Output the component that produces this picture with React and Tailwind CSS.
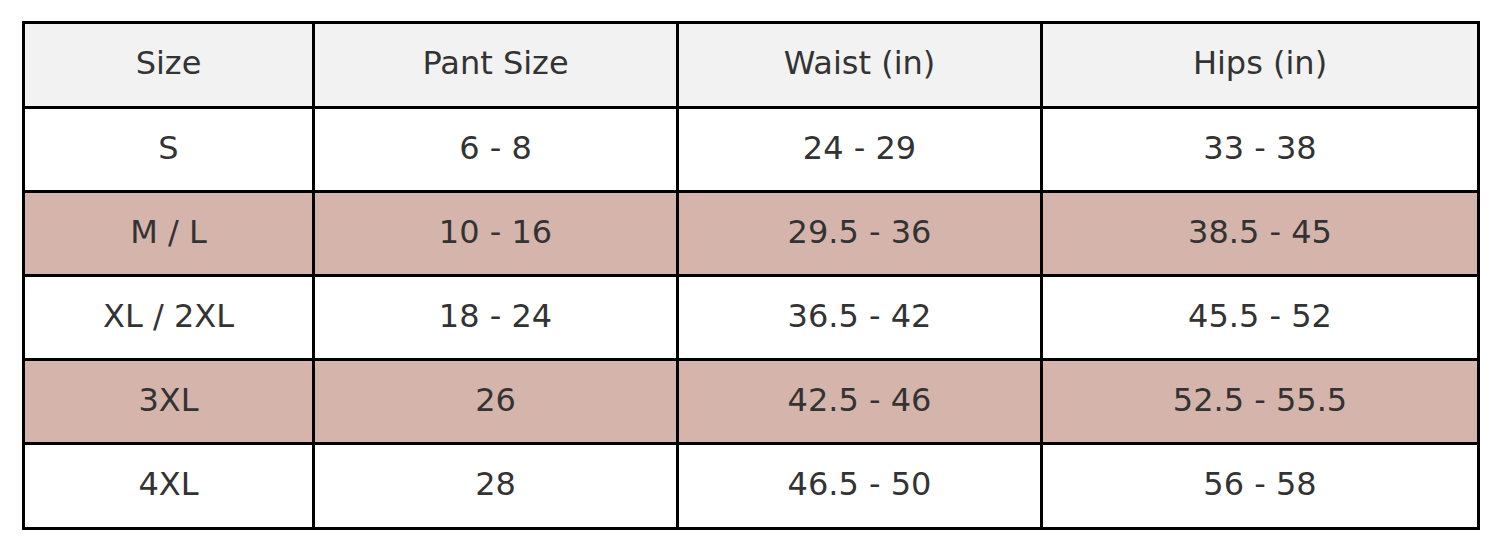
const header = ['Size', 'Pant Size', 'Waist (in)', 'Hips (in)']

const rows = [
  ['S', '6 - 8', '24 - 29', '33 - 38'],
  ['M / L', '10 - 16', '29.5 - 36', '38.5 - 45'],
  ['XL / 2XL', '18 - 24', '36.5 - 42', '45.5 - 52'],
  ['3XL', '26', '42.5 - 46', '52.5 - 55.5'],
  ['4XL', '28', '46.5 - 50', '56 - 58'],
]

const widths = ['w-[290px]', 'w-[364px]', 'w-[364px]', 'w-[437px]']

export default function App() {
  return (
    <div className="w-[1500px] h-[552px] bg-white pt-[21px] pl-[22px] font-['DejaVu_Sans',sans-serif] text-[32px] text-[#333333]">
      <table className="border-collapse border-[3px] border-black table-fixed w-[1455px]">
        <thead>
          <tr className="h-[85px] bg-[#f2f2f2]">
            {header.map((h, i) => (
              <th key={h} className={`${widths[i]} border-[3px] border-black font-normal text-center pb-[4px]`}>
                {h}
              </th>
            ))}
          </tr>
        </thead>
        <tbody>
          {rows.map((r, ri) => (
            <tr key={ri} className={`${ri === 4 ? 'h-[85px]' : 'h-[84px]'} ${ri % 2 === 1 ? 'bg-[#d5b5ab]' : 'bg-white'}`}>
              {r.map((c, ci) => (
                <td key={ci} className="border-[3px] border-black text-center pb-[4px]">
                  {c}
                </td>
              ))}
            </tr>
          ))}
        </tbody>
      </table>
    </div>
  )
}
